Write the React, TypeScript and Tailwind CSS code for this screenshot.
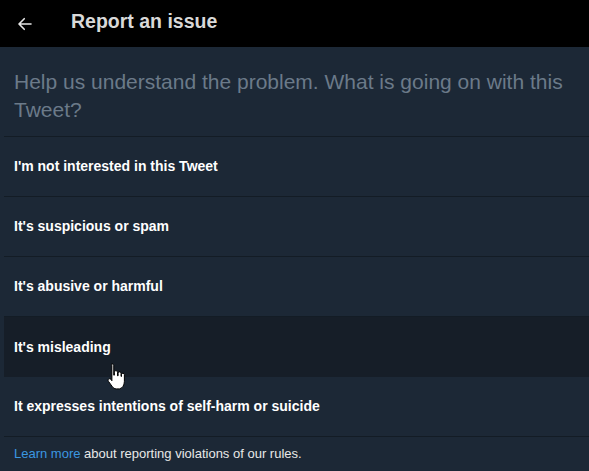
import React from "react";

const rows = [
  "I'm not interested in this Tweet",
  "It's suspicious or spam",
  "It's abusive or harmful",
  "It's misleading",
  "It expresses intentions of self-harm or suicide",
];

export default function App() {
  return (
    <div
      className="relative w-[589px] h-[471px] overflow-hidden bg-[#1c2836] flex flex-col"
      style={{ fontFamily: '"Liberation Sans", Arial, sans-serif' }}
    >
      <div className="h-[47px] bg-black flex items-center shrink-0">
        <div className="w-[71px] pl-[16px] flex items-center">
          <svg width="18" height="18" viewBox="0 0 24 24" fill="none">
            <path d="M20 12H5M11 5l-7 7 7 7" stroke="#e6e6e6" strokeWidth="2.2" strokeLinecap="round" strokeLinejoin="round" />
          </svg>
        </div>
        <div className="text-[19.5px] font-bold text-[#d9d9d9] leading-none pb-[4px]">Report an issue</div>
      </div>
      <div className="pl-[4px] flex flex-col flex-1">
        <div className="pl-[10px] pr-[10px] pt-[21px] h-[90px] text-[21px] leading-[28px] text-[#6b7a89] border-b border-[#131c25]">
          Help us understand the problem. What is going on with this Tweet?
        </div>
        {rows.map((r, i) => (
          <div
            key={r}
            className={
              i === 3
                ? "h-[60px] flex items-center pl-[10px] text-[14px] font-bold text-white bg-[#161e28]"
                : "h-[60px] flex items-center pl-[10px] text-[14px] font-bold text-white border-b border-[#131c25]"
            }
          >
            {r}
          </div>
        ))}
        <div className="pl-[10px] pt-[7px] text-[13px] text-[#e8e8e8]">
          <span className="text-[#3b97e0]">Learn more</span> about reporting violations of our rules.
        </div>
      </div>
      <svg className="absolute left-[106px] top-[362px]" width="23" height="30" viewBox="0 0 18 24">
        <path
          d="M4.5 1.5 C5.5 1.5 6 2.2 6 3 V10.5 L6.5 10.5 V8.2 C6.5 7.4 7 7 7.7 7 C8.4 7 9 7.4 9 8.2 V11 H9.5 V9 C9.5 8.3 10 7.9 10.6 7.9 C11.3 7.9 11.8 8.3 11.8 9 V11.5 H12.2 V10 C12.2 9.3 12.7 9 13.3 9 C14 9 14.5 9.4 14.5 10.1 V15.5 C14.5 18.5 13 21 10.5 21.5 H8 C6.5 21.5 5.5 20.6 4.6 19.4 L1.8 15.5 C1.3 14.8 1.4 14 2 13.6 C2.6 13.2 3.3 13.4 3.8 14 L4.5 15 V3 C4.5 2.2 3.8 1.5 4.5 1.5 Z"
          fill="#ffffff"
          stroke="#000000"
          strokeWidth="0.8"
          strokeLinejoin="round"
        />
      </svg>
    </div>
  );
}
